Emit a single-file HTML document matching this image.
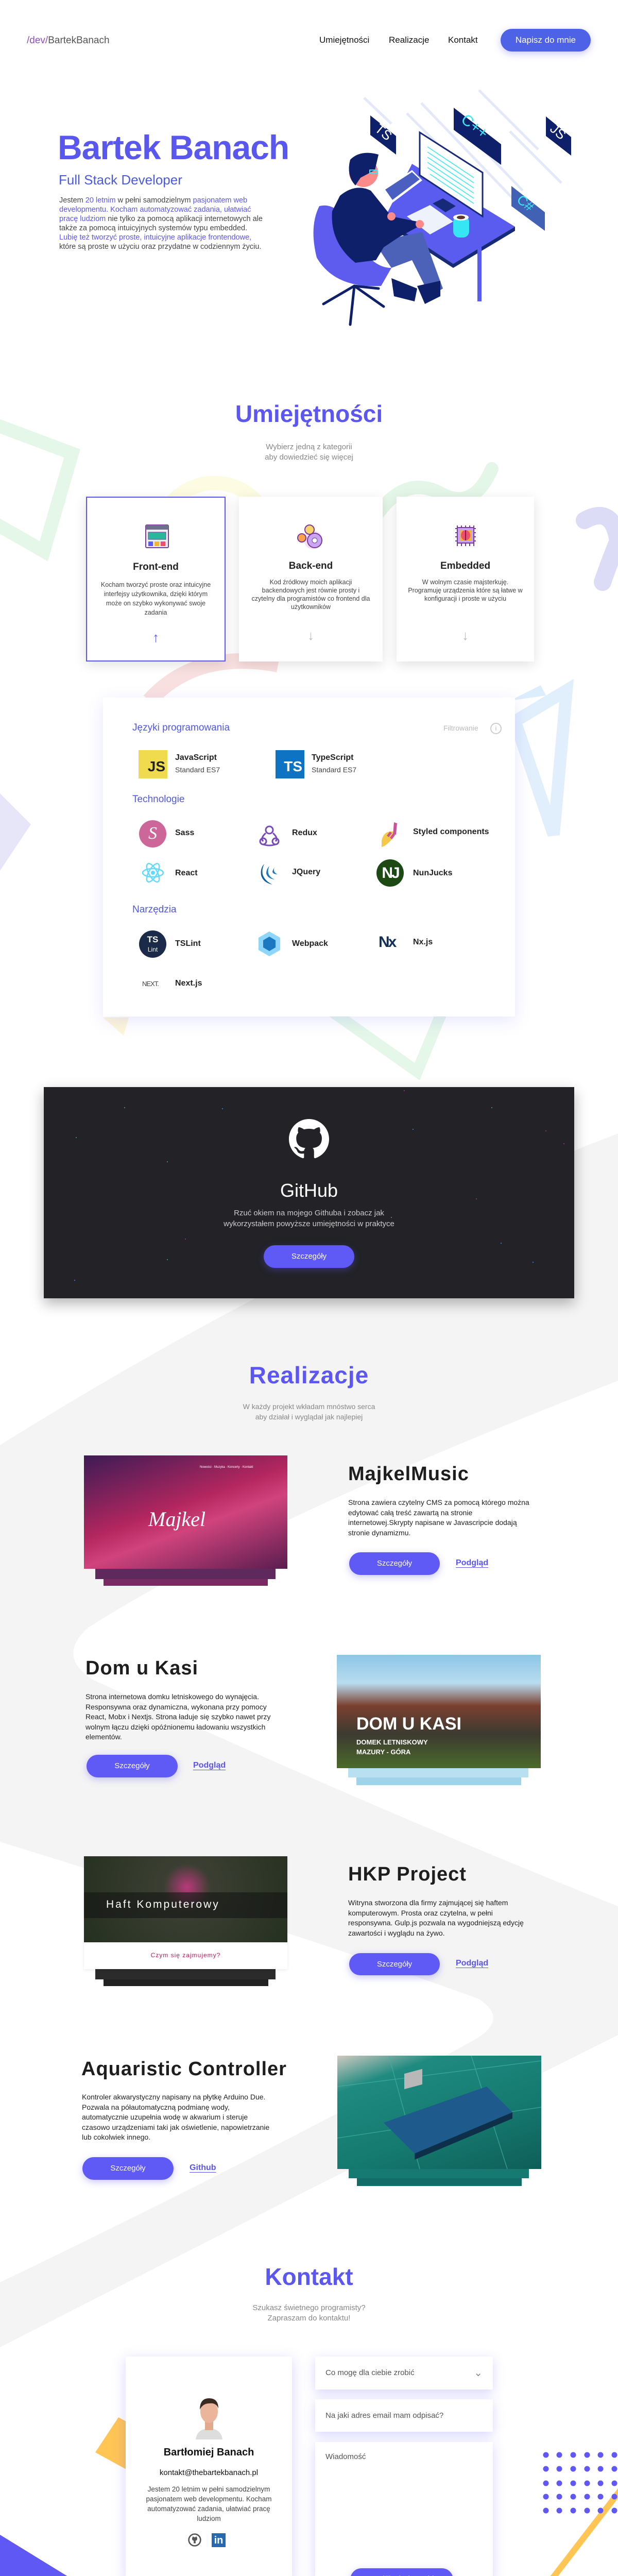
<!DOCTYPE html>
<html><head><meta charset="utf-8"><style>
*{margin:0;padding:0;box-sizing:border-box}
html,body{width:1200px;height:5098px;overflow:hidden;background:#fff;font-family:"Liberation Sans","DejaVu Sans",sans-serif;color:#222}
#w{position:relative;width:1200px;height:5098px;overflow:hidden}
.a{position:absolute}
.c{text-align:center}
.h2{position:absolute;left:0;width:1200px;text-align:center;font-weight:bold;color:#5d57f2;font-size:46px}
.sub{position:absolute;left:0;width:1200px;text-align:center;color:#888;font-size:15px;line-height:20px}
.btn{position:absolute;background:#5f59f5;color:#fff;border-radius:24px;text-align:center;font-size:15px;box-shadow:0 4px 14px rgba(95,89,245,.35)}
.card{position:absolute;background:#fff;box-shadow:0 6px 22px rgba(0,0,0,.12)}
.ct{position:absolute;left:0;width:100%;text-align:center}
.lab{position:absolute;font-weight:bold;font-size:16px;color:#222}
.sec{position:absolute;color:#4f58e6;font-size:19px}
.ptitle{position:absolute;font-weight:bold;font-size:38px;color:#1e1e1e;letter-spacing:1px}
.ptxt{position:absolute;font-size:14px;line-height:19.5px;color:#222;width:380px}
.link{position:absolute;color:#5a55f0;font-size:16px;font-weight:bold;text-decoration:underline;text-underline-offset:4px}
.shot{position:absolute}
.form{position:absolute;background:#fff;box-shadow:0 6px 22px rgba(95,89,245,.25);color:#555;font-size:15px;padding-left:20px}
</style></head><body><div id="w">

<svg class="a" style="left:0;top:0" width="1200" height="5098" viewBox="0 0 1200 5098">
 <path d="M1200 2200 L1200 3950 L600 4250 L0 4556 L0 2805 Q600 2430 1200 2200Z" fill="#f4f4f4"/>
 <path d="M1200 2680 Q500 2950 170 3160 Q110 3215 180 3260 Q700 3500 1200 3700Z" fill="#fff"/>
 <path d="M0 3575 Q600 3760 930 3880 Q990 3920 920 3960 Q500 4190 0 4430Z" fill="#fff"/>
 <path d="M-20 820 L140 880 L85 1070 L-20 1010" fill="none" stroke="#e5f7e9" stroke-width="26"/>
 <path d="M310 1020 A110 110 0 0 1 520 1010" fill="none" stroke="#fdfbe1" stroke-width="28"/>
 <path d="M735 995 Q790 920 860 960 Q920 990 955 910" fill="none" stroke="#e3f6e7" stroke-width="26" stroke-linecap="round"/>
 <path d="M1135 1010 Q1190 980 1200 1050 Q1180 1100 1170 1130" fill="none" stroke="#dcdcf6" stroke-width="34" stroke-linecap="round"/>
 <path d="M290 1360 Q380 1260 540 1290" fill="none" stroke="#f9e0e0" stroke-width="30"/>
 <path d="M990 1360 L1050 1330 L1060 1350Z" fill="#dcedfb"/>
 <path d="M1000 1400 L1100 1340 L1075 1620Z" fill="none" stroke="#e1effc" stroke-width="24"/>
 <path d="M0 1540 L60 1600 L0 1690Z" fill="#e6e6f8"/>
 <path d="M200 1975 L250 1975 L240 2010Z" fill="#fdf6d8"/>
 <path d="M640 1960 L860 1960 L810 2080Z" fill="none" stroke="#e4f7e8" stroke-width="22"/>
 <path d="M0 4920 L290 5098 L0 5098Z" fill="#5f58f5"/>
 <path d="M615 5098 L645 5050 L705 5098Z" fill="#5f58f5"/>
 <path d="M185 4760 L230 4692 L245 4700 L245 4793Z" fill="#ffc555"/>
 <path d="M1215 4820 L1030 5060 Q990 5090 1010 5098" fill="none" stroke="#ffc555" stroke-width="12" stroke-linecap="round"/>
 <g fill="#5f58f5">
  <g id="dr"><circle cx="1060" cy="4765" r="5.5"/><circle cx="1086" cy="4765" r="5.5"/><circle cx="1113" cy="4765" r="5.5"/><circle cx="1140" cy="4765" r="5.5"/><circle cx="1166" cy="4765" r="5.5"/><circle cx="1193" cy="4765" r="5.5"/></g>
  <use href="#dr" y="27"/><use href="#dr" y="55"/><use href="#dr" y="81"/><use href="#dr" y="108"/>
 </g>
</svg>

<div class="a" style="left:52px;top:68px;font-size:19px;color:#555"><span style="color:#8e4fbf">/dev/</span>BartekBanach</div>
<div class="a" style="left:620px;top:68px;font-size:17px;color:#111">Umiejętności</div>
<div class="a" style="left:755px;top:68px;font-size:17px;color:#111">Realizacje</div>
<div class="a" style="left:870px;top:68px;font-size:17px;color:#111">Kontakt</div>
<div class="btn" style="left:972px;top:56px;width:175px;height:44px;line-height:44px;font-size:17px;background:#4d62e6;border-radius:22px">Napisz do mnie</div>

<div class="a" style="left:112px;top:248px;font-size:66px;font-weight:bold;color:#5a57ee;letter-spacing:-1px">Bartek Banach</div>
<div class="a" style="left:114px;top:334px;font-size:26px;color:#4b5ae0">Full Stack Developer</div>
<div class="a" style="left:115px;top:380px;width:400px;font-size:14.5px;line-height:18px;color:#444">Jestem <span style="color:#5a57ee">20 letnim</span> w pełni samodzielnym <span style="color:#5a57ee">pasjonatem web developmentu. Kocham automatyzować zadania, ułatwiać pracę ludziom</span> nie tylko za pomocą aplikacji internetowych ale także za pomocą intuicyjnych systemów typu embedded. <span style="color:#5a57ee">Lubię też tworzyć proste, intuicyjne aplikacje frontendowe,</span> które są proste w użyciu oraz przydatne w codziennym życiu.</div>

<svg class="a" style="left:0;top:0" width="1200" height="700" viewBox="0 0 1200 700">
 <g stroke="#e3e9fb" stroke-width="5">
  <line x1="707" y1="190" x2="760" y2="240"/><line x1="790" y1="220" x2="850" y2="280"/><line x1="818" y1="200" x2="1010" y2="400"/><line x1="930" y1="175" x2="1045" y2="290"/><line x1="890" y1="240" x2="1015" y2="370"/><line x1="990" y1="255" x2="1090" y2="355"/>
 </g>
 <polygon points="719,224 769,264 769,300 719,262" fill="#0f206a"/>
 <text x="728" y="262" fill="#fff" font-size="26" font-family="Liberation Sans" transform="rotate(40 740 255)">TS</text>
 <polygon points="881,209 973,280 973,320 881,252" fill="#0f206a"/>
 <text x="890" y="255" fill="#3ce8f2" font-size="30" font-family="Liberation Sans" transform="rotate(38 920 250)">C++</text>
 <polygon points="1060,226 1109,266 1109,302 1060,264" fill="#0f206a"/>
 <text x="1068" y="262" fill="#fff" font-size="26" font-family="Liberation Sans" transform="rotate(40 1080 255)">JS</text>
 <polygon points="993,361 1058,412 1058,448 993,400" fill="#4061b4"/>
 <text x="1003" y="403" fill="#3ce8f2" font-size="26" font-family="Liberation Sans" transform="rotate(40 1020 395)">C#</text>
 <polygon points="800,318 1000,440 880,512 746,425" fill="#5a5cf0"/>
 <polygon points="746,425 880,512 880,520 746,433" fill="#172a7a"/>
 <polygon points="880,512 1000,440 1000,448 880,520" fill="#172a7a"/>
 <rect x="927" y="455" width="8" height="130" fill="#5a5cf0"/>
 <polygon points="742,370 800,330 820,350 760,395" fill="#fff"/>
 <polygon points="748,368 800,334 815,348 762,388" fill="#4a5fc0"/>
 <polygon points="815,257 937,335 937,420 815,340" fill="#fff" stroke="#172a7a" stroke-width="3"/>
 <g stroke="#3ce8f2" stroke-width="1.6"><line x1="830" y1="285" x2="920" y2="345"/><line x1="830" y1="295" x2="920" y2="355"/><line x1="830" y1="305" x2="920" y2="365"/><line x1="830" y1="315" x2="920" y2="375"/><line x1="830" y1="325" x2="920" y2="385"/><line x1="835" y1="338" x2="920" y2="395"/></g>
 <polygon points="790,420 835,398 880,430 835,455" fill="#eef2fb"/>
 <polygon points="840,395 860,385 885,400 865,412" fill="#172a7a"/>
 <rect x="880" y="419" width="31" height="42" rx="12" fill="#37e6f5"/>
 <ellipse cx="895" cy="422" rx="15" ry="6" fill="#fff"/><ellipse cx="895" cy="422" rx="8" ry="3.5" fill="#5a3a2a"/>
 <path d="M620 400 Q660 390 690 460 Q720 520 760 520 L740 555 Q650 560 615 500 Q600 440 620 400Z" fill="#5d5cef"/>
 <g stroke="#0f206a" stroke-width="5" stroke-linecap="round"><line x1="688" y1="555" x2="628" y2="590"/><line x1="688" y1="555" x2="745" y2="595"/><line x1="688" y1="555" x2="680" y2="630"/><line x1="688" y1="555" x2="735" y2="560"/></g>
 <path d="M727 470 L820 450 L860 560 L835 575 L800 505 L760 520Z" fill="#4c62b8"/>
 <path d="M760 540 L810 560 L805 585 L765 575Z" fill="#0f206a"/>
 <path d="M810 555 L855 545 L855 575 L825 590Z" fill="#0f206a"/>
 <path d="M660 380 Q690 355 720 370 L760 420 L810 430 L812 440 L775 460 L745 480 L730 505 L690 510 Q640 470 645 410Z" fill="#0f206a"/>
 <circle cx="706" cy="335" r="28" fill="#fb8a8a"/>
 <path d="M680 310 Q700 290 735 300 L728 330 L700 345 L690 360 Q672 340 680 310Z" fill="#0f206a"/>
 <rect x="718" y="330" width="14" height="6" fill="none" stroke="#3ce8f2" stroke-width="2"/>
 <circle cx="760" cy="420" r="8" fill="#fb8a8a"/><circle cx="815" cy="435" r="8" fill="#fb8a8a"/>
</svg>

<div class="h2" style="top:776px">Umiejętności</div>
<div class="sub" style="top:858px">Wybierz jedną z kategorii<br>aby dowiedzieć się więcej</div>

<div class="card" style="left:167px;top:964px;width:271px;height:320px;border:2px solid #5b58f0">
 <svg class="a" style="left:113px;top:52px" width="46" height="46" viewBox="0 0 46 46"><rect x="1" y="1" width="44" height="44" rx="2" fill="#eee" stroke="#7a3b9c" stroke-width="2"/><rect x="1" y="1" width="44" height="9" fill="#6e6f8a"/><rect x="6" y="15" width="34" height="14" fill="#2bb79b" stroke="#7a3b9c"/><rect x="6" y="33" width="9" height="9" fill="#5d5cef"/><rect x="18" y="33" width="9" height="9" fill="#f2b632"/><rect x="30" y="33" width="9" height="9" fill="#ef4f6c"/></svg>
 <div class="ct" style="top:124px;font-size:19px;font-weight:bold">Front-end</div>
 <div class="ct" style="top:160px;font-size:12.5px;line-height:18px;color:#444;padding:0 22px">Kocham tworzyć proste oraz intuicyjne interfejsy użytkownika, dzięki którym może on szybko wykonywać swoje zadania</div>
 <div class="ct" style="top:256px;font-size:26px;color:#5b58f0">↑</div>
</div>
<div class="card" style="left:464px;top:964px;width:279px;height:320px">
 <svg class="a" style="left:112px;top:52px" width="56" height="50" viewBox="0 0 56 50"><circle cx="32" cy="32" r="18" fill="#f5e1fa"/><circle cx="25" cy="12" r="9" fill="#f6d36b" stroke="#7a3b9c" stroke-width="2"/><circle cx="10" cy="28" r="8" fill="#f8a24c" stroke="#7a3b9c" stroke-width="2"/><circle cx="35" cy="33" r="14" fill="#c9a6f3" stroke="#7a3b9c" stroke-width="2"/><circle cx="35" cy="33" r="5" fill="#fff" stroke="#7a3b9c"/></svg>
 <div class="ct" style="top:124px;font-size:19px;font-weight:bold">Back-end</div>
 <div class="ct" style="top:158px;font-size:12.5px;line-height:16px;color:#444;padding:0 22px">Kod źródłowy moich aplikacji backendowych jest równie prosty i czytelny dla programistów co frontend dla użytkowników</div>
 <div class="ct" style="top:254px;font-size:26px;color:#bbb">↓</div>
</div>
<div class="card" style="left:770px;top:964px;width:267px;height:320px">
 <svg class="a" style="left:110px;top:50px" width="48" height="50" viewBox="0 0 48 50"><g stroke="#7a3b9c" stroke-width="2"><path d="M8 6v40M16 6v40M24 6v40M32 6v40M40 6v40M4 12h40M4 20h40M4 28h40M4 36h40"/></g><rect x="8" y="10" width="32" height="30" fill="#c9a6f3" stroke="#7a3b9c" stroke-width="2"/><rect x="13" y="15" width="22" height="20" fill="#f2b632"/><ellipse cx="24" cy="25" rx="9" ry="10" fill="#ef4f6c"/><line x1="24" y1="15" x2="24" y2="35" stroke="#7a1f4c" stroke-width="2"/></svg>
 <div class="ct" style="top:124px;font-size:19px;font-weight:bold">Embedded</div>
 <div class="ct" style="top:158px;font-size:12.5px;line-height:16px;color:#444;padding:0 22px">W wolnym czasie majsterkuję. Programuję urządzenia które są łatwe w konfiguracji i proste w użyciu</div>
 <div class="ct" style="top:254px;font-size:26px;color:#bbb">↓</div>
</div>

<div class="card" style="left:200px;top:1354px;width:800px;height:619px;box-shadow:0 8px 30px rgba(95,89,245,.15)"></div>
<div class="sec" style="left:257px;top:1402px">Języki programowania</div>
<div class="a" style="left:861px;top:1405px;font-size:14px;color:#bbb">Filtrowanie</div>
<div class="a" style="left:952px;top:1403px;width:22px;height:22px;border:2px solid #ccc;border-radius:50%;text-align:center;font-size:13px;line-height:18px;color:#bbb">i</div>
<div class="a" style="left:269px;top:1456px;width:56px;height:55px;background:#f0db4f;font-weight:bold;font-size:28px;line-height:64px;text-align:right;padding-right:4px;color:#222">JS</div>
<div class="lab" style="left:340px;top:1462px">JavaScript</div>
<div class="a" style="left:340px;top:1486px;font-size:14px;color:#444">Standard ES7</div>
<div class="a" style="left:535px;top:1456px;width:56px;height:55px;background:#0f73c4;font-weight:bold;font-size:28px;line-height:64px;text-align:right;padding-right:4px;color:#fff">TS</div>
<div class="lab" style="left:605px;top:1462px">TypeScript</div>
<div class="a" style="left:605px;top:1486px;font-size:14px;color:#444">Standard ES7</div>

<div class="sec" style="left:257px;top:1541px">Technologie</div>
<div class="a" style="left:270px;top:1592px;width:53px;height:53px;border-radius:50%;background:#cd6799;color:#fff;font-size:34px;text-align:center;line-height:52px;font-style:italic;font-family:'Liberation Serif',serif">S</div>
<div class="lab" style="left:340px;top:1608px">Sass</div>
<svg class="a" style="left:503px;top:1597px" width="40" height="48" viewBox="0 0 40 48"><g fill="none" stroke="#764abc" stroke-width="3"><circle cx="20" cy="14" r="7"/><circle cx="8" cy="36" r="6"/><circle cx="32" cy="36" r="6"/><path d="M13 20 Q2 30 8 36 M27 20 Q38 30 32 36 M8 42 Q20 46 32 42"/></g></svg>
<div class="lab" style="left:567px;top:1608px">Redux</div>
<svg class="a" style="left:737px;top:1592px" width="42" height="56" viewBox="0 0 42 56"><path d="M4 40 Q8 20 26 22 L30 30 Q14 50 4 52Z" fill="#f6c84a"/><path d="M28 4 L34 6 L32 28 L26 28Z" fill="#c9549b"/><path d="M14 30 l6 -8 4 3 -6 8z M20 34 l6-8 4 3-6 8z" fill="#c9549b"/></svg>
<div class="lab" style="left:802px;top:1606px">Styled components</div>

<svg class="a" style="left:275px;top:1667px" width="44" height="54" viewBox="0 0 44 54"><g fill="none" stroke="#61dafb" stroke-width="2.5"><ellipse cx="22" cy="27" rx="20" ry="8"/><ellipse cx="22" cy="27" rx="20" ry="8" transform="rotate(60 22 27)"/><ellipse cx="22" cy="27" rx="20" ry="8" transform="rotate(-60 22 27)"/></g><circle cx="22" cy="27" r="4" fill="#61dafb"/></svg>
<div class="lab" style="left:340px;top:1686px">React</div>
<svg class="a" style="left:503px;top:1673px" width="42" height="48" viewBox="0 0 42 48"><path d="M10 4 Q-2 30 26 44 Q8 40 4 26 Q2 12 10 4Z" fill="#0b5ea8"/><path d="M20 8 Q12 26 30 34 Q16 32 14 22 Q14 14 20 8Z" fill="#1a78c2"/><path d="M30 10 Q26 20 36 24 Q26 24 26 18Z" fill="#1a78c2"/></svg>
<div class="lab" style="left:567px;top:1684px">JQuery</div>
<div class="a" style="left:731px;top:1668px;width:53px;height:53px;border-radius:50%;background:#1c4914;color:#fff;font-weight:bold;font-size:30px;text-align:center;line-height:53px;letter-spacing:-3px">NJ</div>
<div class="lab" style="left:802px;top:1686px">NunJucks</div>

<div class="sec" style="left:257px;top:1755px">Narzędzia</div>
<div class="a" style="left:270px;top:1806px;width:53px;height:53px;border-radius:50%;background:#1b2a48;color:#fff;font-weight:bold;font-size:17px;text-align:center;line-height:18px;padding-top:9px">TS<br><span style="font-size:12px;font-weight:normal">Lint</span></div>
<div class="lab" style="left:340px;top:1823px">TSLint</div>
<svg class="a" style="left:500px;top:1806px" width="46" height="52" viewBox="0 0 46 52"><polygon points="23,2 44,14 44,38 23,50 2,38 2,14" fill="#8ed6fb"/><polygon points="23,12 35,19 35,33 23,40 11,33 11,19" fill="#1c78c0"/></svg>
<div class="lab" style="left:567px;top:1823px">Webpack</div>
<div class="a" style="left:735px;top:1812px;font-weight:bold;font-size:30px;color:#143055;letter-spacing:-3px">Nx</div>
<div class="lab" style="left:802px;top:1820px">Nx.js</div>
<div class="a" style="left:276px;top:1902px;font-size:13px;color:#444;letter-spacing:-1px">NEXT.</div>
<div class="lab" style="left:340px;top:1900px">Next.js</div>

<div class="a" style="left:85px;top:2110px;width:1030px;height:410px;background:#222227;box-shadow:0 10px 25px rgba(0,0,0,.3)">
 <svg class="a" style="left:476px;top:62px" width="78" height="78" viewBox="0 0 16 16"><path fill="#fff" d="M8 0C3.58 0 0 3.58 0 8c0 3.54 2.29 6.53 5.470 7.59.4.07.55-.17.55-.38 0-.19-.01-.82-.01-1.49-2.01.37-2.530-.49-2.690-.94-.09-.23-.48-.94-.82-1.13-.28-.15-.68-.52-.01-.53.63-.01 1.08.58 1.23.82.72 1.21 1.87.87 2.33.66.07-.52.28-.87.51-1.07-1.78-.2-3.64-.89-3.64-3.95 0-.87.31-1.59.82-2.15-.08-.2-.36-1.020.08-2.12 0 0 .67-.21 2.2.82.64-.18 1.32-.27 2-.27.68 0 1.36.09 2 .27 1.53-1.04 2.2-.82 2.2-.82.44 1.1.16 1.92.08 2.12.51.56.82 1.27.82 2.15 0 3.07-1.87 3.75-3.65 3.95.29.25.54.73.54 1.48 0 1.07-.01 1.93-.01 2.2 0 .21.15.46.55.38A8.013 8.013 0 0016 8c0-4.42-3.58-8-8-8z"/></svg>
 <div class="ct" style="top:180px;font-size:36px;color:#fff">GitHub</div>
 <div class="ct" style="top:234px;font-size:15px;line-height:21px;color:#ccc">Rzuć okiem na mojego Githuba i zobacz jak<br>wykorzystałem powyższe umiejętności w praktyce</div>
 <div class="btn" style="left:427px;top:307px;width:176px;height:44px;line-height:44px">Szczegóły</div>
 <svg class="a" style="left:0;top:0" width="1030" height="410"><g fill="#3b6"><circle cx="157" cy="40" r="1"/><circle cx="63" cy="98" r="1"/><circle cx="240" cy="145" r="1"/><circle cx="870" cy="40" r="1"/><circle cx="675" cy="253" r="1"/><circle cx="240" cy="335" r="1"/></g><g fill="#48f"><circle cx="347" cy="42" r="1"/><circle cx="717" cy="82" r="1"/><circle cx="888" cy="303" r="1"/><circle cx="60" cy="375" r="1"/><circle cx="950" cy="340" r="1"/></g><g fill="#a3a"><circle cx="700" cy="7" r="1"/><circle cx="975" cy="85" r="1"/><circle cx="840" cy="217" r="1"/><circle cx="275" cy="295" r="1"/><circle cx="1010" cy="110" r="1"/></g></svg>
</div>

<div class="h2" style="top:2642px;letter-spacing:1px">Realizacje</div>
<div class="sub" style="top:2720px;font-size:14px">W każdy projekt wkładam mnóstwo serca<br>aby działał i wyglądał jak najlepiej</div>

<div class="shot" style="left:201px;top:3045px;width:319px;height:33px;background:#7a2a62"></div>
<div class="shot" style="left:185px;top:3045px;width:350px;height:20px;background:#5e2a5e"></div>
<div class="shot" style="left:163px;top:2825px;width:395px;height:220px;background:linear-gradient(160deg,#3d1b55 0%,#b3265e 45%,#d0437c 60%,#5a1d4f 100%)">
 <div class="a" style="left:125px;top:100px;font-family:'Liberation Serif',serif;font-style:italic;color:#fff;font-size:40px">Majkel</div>
 <div class="a" style="left:225px;top:20px;color:#fff;font-size:6px">Nowości · Muzyka · Koncerty · Kontakt</div>
</div>
<div class="ptitle" style="left:676px;top:2840px">MajkelMusic</div>
<div class="ptxt" style="left:676px;top:2907px;width:370px">Strona zawiera czytelny CMS za pomocą którego można edytować całą treść zawartą na stronie internetowej.Skrypty napisane w Javascripcie dodają stronie dynamizmu.</div>
<div class="btn" style="left:678px;top:3013px;width:176px;height:44px;line-height:44px">Szczegóły</div>
<div class="link" style="left:885px;top:3025px">Podgląd</div>

<div class="ptitle" style="left:166px;top:3217px">Dom u Kasi</div>
<div class="ptxt" style="left:166px;top:3284px">Strona internetowa domku letniskowego do wynajęcia. Responsywna oraz dynamiczna, wykonana przy pomocy React, Mobx i Nextjs. Strona ładuje się szybko nawet przy wolnym łączu dzięki opóźnionemu ładowaniu wszystkich elementów.</div>
<div class="btn" style="left:168px;top:3406px;width:177px;height:44px;line-height:44px">Szczegóły</div>
<div class="link" style="left:375px;top:3418px">Podgląd</div>
<div class="shot" style="left:692px;top:3432px;width:320px;height:33px;background:#9fd3ea"></div>
<div class="shot" style="left:676px;top:3432px;width:350px;height:18px;background:#b8e0f0"></div>
<div class="shot" style="left:654px;top:3212px;width:396px;height:220px;background:linear-gradient(180deg,#8cc6e6 0%,#b9dcef 25%,#7a4030 45%,#3d3a30 70%,#4b6a2a 100%)">
 <div class="a" style="left:38px;top:115px;color:#fff;font-weight:bold;font-size:34px">DOM U KASI</div>
 <div class="a" style="left:38px;top:160px;color:#fff;font-weight:bold;font-size:13px;line-height:19px">DOMEK LETNISKOWY<br>MAZURY - GÓRA</div>
</div>

<div class="shot" style="left:201px;top:3822px;width:320px;height:33px;background:#222"></div>
<div class="shot" style="left:185px;top:3822px;width:350px;height:20px;background:#2b2b2b"></div>
<div class="shot" style="left:163px;top:3603px;width:395px;height:219px;background:#fff;box-shadow:0 2px 6px rgba(0,0,0,.08)">
 <div class="a" style="left:0;top:0;width:395px;height:167px;background:radial-gradient(circle at 200px 60px,#b83a7a 0,#3b3f33 45px,#25301f 100%)"></div>
 <div class="a" style="left:0;top:70px;width:395px;height:50px;background:rgba(20,20,20,.6)"></div>
 <div class="a" style="left:43px;top:82px;color:#fff;font-size:21px;letter-spacing:3px">Haft Komputerowy</div>
 <div class="a" style="left:0;top:185px;width:395px;text-align:center;color:#c2185b;font-size:12px;letter-spacing:1px">Czym się zajmujemy?</div>
</div>
<div class="ptitle" style="left:676px;top:3617px">HKP Project</div>
<div class="ptxt" style="left:676px;top:3684px;width:370px">Witryna stworzona dla firmy zajmującej się haftem komputerowym. Prosta oraz czytelna, w pełni responsywna. Gulp.js pozwala na wygodniejszą edycję zawartości i wyglądu na żywo.</div>
<div class="btn" style="left:678px;top:3791px;width:176px;height:43px;line-height:43px">Szczegóły</div>
<div class="link" style="left:885px;top:3802px">Podgląd</div>

<div class="ptitle" style="left:158px;top:3995px">Aquaristic Controller</div>
<div class="ptxt" style="left:159px;top:4061px">Kontroler akwarystyczny napisany na płytkę Arduino Due. Pozwala na półautomatyczną podmianę wody, automatycznie uzupełnia wodę w akwarium i steruje czasowo urządzeniami taki jak oświetlenie, napowietrzanie lub cokolwiek innego.</div>
<div class="btn" style="left:160px;top:4187px;width:177px;height:44px;line-height:44px">Szczegóły</div>
<div class="link" style="left:368px;top:4199px">Github</div>
<div class="shot" style="left:693px;top:4210px;width:320px;height:33px;background:#136d67"></div>
<div class="shot" style="left:677px;top:4210px;width:350px;height:18px;background:#177a72"></div>
<div class="shot" style="left:655px;top:3990px;width:396px;height:220px;background:linear-gradient(160deg,#cfc9c0 0%,#1f8a80 20%,#157a70 60%,#0f5e58 100%)">
 <svg class="a" style="left:0;top:0" width="396" height="220"><g stroke="#3fb3a3" stroke-width="1.5" opacity=".7"><line x1="0" y1="60" x2="396" y2="10"/><line x1="0" y1="160" x2="396" y2="100"/><line x1="100" y1="0" x2="160" y2="220"/><line x1="260" y1="0" x2="330" y2="220"/></g><polygon points="90,130 290,60 340,110 150,190" fill="#1e5a8c"/><polygon points="150,190 340,110 340,122 150,202" fill="#0e2f4a"/><rect x="130" y="70" width="35" height="30" fill="#b8b8b8" transform="skewY(-15)"/></svg>
</div>

<div class="h2" style="top:4392px">Kontakt</div>
<div class="sub" style="top:4470px">Szukasz świetnego programisty?<br>Zapraszam do kontaktu!</div>

<div class="card" style="left:244px;top:4574px;width:323px;height:434px;box-shadow:0 6px 24px rgba(95,89,245,.25)">
 <svg class="a" style="left:132px;top:73px" width="60" height="88" viewBox="0 0 60 88"><path d="M4 88 Q6 72 20 68 L40 68 Q54 72 56 88Z" fill="#ddd"/><rect x="22" y="52" width="16" height="18" fill="#e2a98a"/><ellipse cx="30" cy="34" rx="17" ry="22" fill="#eab59a"/><path d="M12 30 Q12 8 30 8 Q48 8 48 28 Q44 16 30 18 Q18 18 12 30Z" fill="#3a2a22"/></svg>
 <div class="ct" style="top:175px;font-size:20px;font-weight:bold;color:#111">Bartłomiej Banach</div>
 <div class="ct" style="top:217px;font-size:15px;color:#111">kontakt@thebartekbanach.pl</div>
 <div class="ct" style="top:248px;font-size:13.5px;line-height:19px;color:#444;padding:0 32px">Jestem 20 letnim w pełni samodzielnym pasjonatem web developmentu. Kocham automatyzować zadania, ułatwiać pracę ludziom</div>
 <svg class="a" style="left:121px;top:343px" width="26" height="26" viewBox="0 0 16 16"><circle cx="8" cy="8" r="7" fill="none" stroke="#555" stroke-width="1.6"/><path fill="#555" d="M5 5.5 L6 3.8 L7.3 4.8 H8.7 L10 3.8 L11 5.5 Q11.5 8.5 9 9 L9.3 12 H6.7 L7 9 Q4.5 8.5 5 5.5Z"/></svg>
 <div class="a" style="left:167px;top:343px;width:27px;height:27px;background:#2867b2;color:#fff;font-weight:bold;font-size:20px;line-height:28px;text-align:center">in</div>
</div>

<div class="form" style="left:612px;top:4574px;width:345px;height:64px;line-height:64px">Co mogę dla ciebie zrobić<span style="position:absolute;right:20px;top:0;color:#888;font-size:20px">⌄</span></div>
<div class="form" style="left:612px;top:4657px;width:345px;height:63px;line-height:63px">Na jaki adres email mam odpisać?</div>
<div class="form" style="left:612px;top:4740px;width:345px;height:268px;padding-top:20px">Wiadomość</div>
<div class="btn" style="left:680px;top:4985px;width:200px;height:44px;line-height:44px;font-size:16px">Wyślij wiadomość</div>
<div class="a" style="left:1102px;top:5053px;font-size:17px;color:#999"><span style="color:#5a57ee">PL</span> | EN</div>
</div></body></html>
